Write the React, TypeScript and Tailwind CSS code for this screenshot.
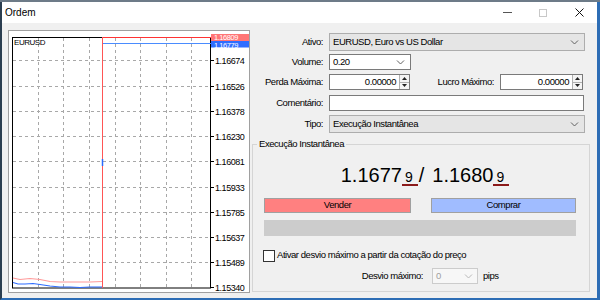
import React from 'react';

const ui = "font-['Liberation_Sans',Arial,sans-serif] text-[9.5px] tracking-[-0.45px]";

const gridX = [38, 63, 89, 115, 140, 166, 191];
const gridY = [60, 86, 111, 136, 161, 187, 212, 237, 262];
const prices: [string, number][] = [
  ['1.16674', 60],
  ['1.16526', 86],
  ['1.16378', 111],
  ['1.16230', 136],
  ['1.16081', 161],
  ['1.15933', 187],
  ['1.15785', 212],
  ['1.15637', 237],
  ['1.15489', 262],
  ['1.15340', 287],
];

const Chevron = ({ color = '#606060' }: { color?: string }) => (
  <svg width="9" height="5" viewBox="0 0 9 5">
    <path d="M1 0.5 L4.5 4 L8 0.5" fill="none" stroke={color} strokeWidth="1" />
  </svg>
);

const Spinner = () => (
  <div className="flex flex-col w-[10px] h-full border-l border-[#b0b0b0] bg-[#f4f4f4]">
    <div className="flex-1 flex items-center justify-center border-b border-[#b0b0b0]">
      <svg width="5" height="3" viewBox="0 0 5 3">
        <path d="M0 3 L2.5 0 L5 3 Z" fill="#222" />
      </svg>
    </div>
    <div className="flex-1 flex items-center justify-center">
      <svg width="5" height="3" viewBox="0 0 5 3">
        <path d="M0 0 L2.5 3 L5 0 Z" fill="#222" />
      </svg>
    </div>
  </div>
);

const Chart = () => (
  <div className="ml-[6px] mt-[7px] w-[242px] h-[263px] border border-[#a0a0a0] bg-white">
    <svg width={240} height={261} viewBox="9 31 240 261" className="block">
      {gridX.map((x) => (
        <line key={x} x1={x + 0.5} y1={38} x2={x + 0.5} y2={288} stroke="#a8a8a8" strokeDasharray="3 3" />
      ))}
      {gridY.map((y) => (
        <line key={y} x1={13} y1={y + 0.5} x2={210} y2={y + 0.5} stroke="#a8a8a8" strokeDasharray="3 3" />
      ))}
      <rect x={12.5} y={37.5} width={198} height={250.5} fill="none" stroke="#000" />
      {prices.map(([p, y]) => (
        <g key={p}>
          <line x1={210} y1={y + 0.5} x2={214} y2={y + 0.5} stroke="#000" />
          <text x={215} y={y + 3.5} fontSize={9} fontFamily="Liberation Sans, Arial, sans-serif" fill="#000">
            {p}
          </text>
        </g>
      ))}
      <text x={14} y={44.5} fontSize={8} fontFamily="Liberation Sans, Arial, sans-serif" fill="#000">
        EURUSD
      </text>
      <line x1={102} y1={37.5} x2={211} y2={37.5} stroke="#ff3333" />
      <line x1={103} y1={43.5} x2={211} y2={43.5} stroke="#4a8cff" />
      <line x1={102.5} y1={37} x2={102.5} y2={288} stroke="#ff5555" />
      <line x1={102.5} y1={159} x2={102.5} y2={166} stroke="#2a6cff" strokeWidth={1.5} />
      <polyline
        points="13,278 20,279.5 30,278.5 40,279.5 50,281.5 60,282 75,282 90,282 102,281.5"
        fill="none"
        stroke="#ff9a9a"
        strokeWidth={1.2}
      />
      <polyline
        points="13,282.5 18,284 25,284 33,283.5 40,284.5 50,286 60,287 70,287 80,287.5 90,287 102,287"
        fill="none"
        stroke="#2f6dff"
        strokeWidth={1.2}
      />
      <rect x={211} y={34} width={38} height={7} fill="#ff7575" />
      <text x={214} y={40} fontSize={7.5} fontFamily="Liberation Sans, Arial, sans-serif" fill="#fff">
        1.16809
      </text>
      <rect x={211} y={41} width={38} height={6.5} fill="#2f6dff" />
      <text x={214} y={47.5} fontSize={7.5} fontFamily="Liberation Sans, Arial, sans-serif" fill="#fff">
        1.16779
      </text>
    </svg>
  </div>
);

const Label = ({ children, w = 'w-[77px]' }: { children: React.ReactNode; w?: string }) => (
  <div className={`${w} shrink-0 text-right pr-[6px]`}>{children}</div>
);

const Price = ({ main, last }: { main: string; last: string }) => (
  <span className="flex items-baseline">
    <span>{main}</span>
    <span className="text-[14px] border-b-2 border-[#8b1a1a] leading-[14px] pl-[3px] pr-[5px] -mb-[2px]">{last}</span>
  </span>
);

export default function App() {
  return (
    <div className={`w-[600px] h-[300px] overflow-hidden bg-[#6d7b88] pt-[2px] text-black ${ui}`}>
      <div className="h-[298px] flex flex-col border-l-2 border-r-[3px] border-b-2 border-l-[#2b3e50] border-r-[#2d6db5] border-b-[#2d6db5] bg-[#f0f0f0]">
        {/* title bar */}
        <div className="h-[21px] bg-white flex items-center shrink-0">
          <span className="pl-[3px] text-[10px] tracking-normal">Ordem</span>
          <div className="ml-auto flex h-full">
            <div className="w-[36px] flex items-center justify-center">
              <div className="w-[9px] h-px bg-[#555]" />
            </div>
            <div className="w-[36px] flex items-center justify-center">
              <div className="w-[8px] h-[8px] border border-[#c8c8c8]" />
            </div>
            <div className="w-[36px] flex items-center justify-center">
              <svg width="9" height="9" viewBox="0 0 9 9">
                <path d="M0.5 0.5 L8.5 8.5 M8.5 0.5 L0.5 8.5" stroke="#111" strokeWidth="1" />
              </svg>
            </div>
          </div>
        </div>

        <div className="flex flex-1">
          <Chart />

          <div className="ml-[2px] w-[338px] pt-[10px] flex flex-col">
            <div className="flex items-center h-[18px]">
              <Label>Ativo:</Label>
              <div className="w-[256px] h-full bg-[#e5e5e5] border border-[#adadad] flex items-center pl-[3px] pr-[5px]">
                <span>EURUSD, Euro vs US Dollar</span>
                <span className="ml-auto"><Chevron /></span>
              </div>
            </div>

            <div className="flex items-center h-[16px] mt-[3px]">
              <Label>Volume:</Label>
              <div className="w-[82px] h-full bg-white border border-[#7a7a7a] flex items-center pl-[3px] pr-[5px]">
                <span>0.20</span>
                <span className="ml-auto"><Chevron /></span>
              </div>
            </div>

            <div className="flex items-center h-[16px] mt-[4px]">
              <Label>Perda Máxima:</Label>
              <div className="w-[81px] h-full bg-white border border-[#7a7a7a] flex items-center">
                <span className="flex-1 text-right pr-[3px]">0.00000</span>
                <Spinner />
              </div>
              <Label w="w-[90px]">Lucro Máximo:</Label>
              <div className="w-[83px] h-full bg-white border border-[#7a7a7a] flex items-center">
                <span className="flex-1 text-right pr-[3px]">0.00000</span>
                <Spinner />
              </div>
            </div>

            <div className="flex items-center h-[16px] mt-[5px]">
              <Label>Comentário:</Label>
              <div className="w-[255px] h-full bg-white border border-[#7a7a7a]" />
            </div>

            <div className="flex items-center h-[18px] mt-[4px]">
              <Label>Tipo:</Label>
              <div className="w-[256px] h-full bg-[#e5e5e5] border border-[#adadad] flex items-center pl-[3px] pr-[5px]">
                <span>Execução Instantânea</span>
                <span className="ml-auto"><Chevron /></span>
              </div>
            </div>

            <fieldset className="mt-[5px] w-[338px] border border-[#d5d5d5] pb-[7px]">
              <legend className="ml-[4px] px-[2px] leading-[12px]">Execução Instantânea</legend>

              <div className="mt-[13px] h-[24px] flex justify-center items-baseline pl-[8px] text-[20px] leading-[24px] tracking-normal">
                <Price main="1.1677" last="9" />
                <span className="ml-[1px] mr-[8px]">/</span>
                <Price main="1.1680" last="9" />
              </div>

              <div className="mt-[11px] pl-[11px] flex gap-[20px]">
                <div className="w-[147px] h-[15px] bg-[#ff8080] border border-[#a0a0a0] flex items-center justify-center">
                  Vender
                </div>
                <div className="w-[145px] h-[15px] bg-[#a0bcff] border border-[#a0a0a0] flex items-center justify-center">
                  Comprar
                </div>
              </div>

              <div className="mt-[7px] ml-[11px] w-[312px] h-[16px] bg-[#cccccc]" />

              <div className="mt-[13px] pl-[10px] flex items-center h-[13px]">
                <div className="w-[12px] h-[12px] bg-white border border-[#333]" />
                <span className="ml-[2px]">Ativar desvio máximo a partir da cotação do preço</span>
              </div>

              <div className="mt-[6px] flex items-center h-[16px]">
                <div className="w-[170px] text-right">Desvio máximo:</div>
                <div className="ml-[9px] w-[46px] h-full bg-[#f7f7f7] border border-[#cccccc] flex items-center pl-[3px] pr-[4px] text-[#a0a0a0]">
                  <span>0</span>
                  <span className="ml-auto"><Chevron color="#b8b8b8" /></span>
                </div>
                <span className="ml-[5px]">pips</span>
              </div>
            </fieldset>
          </div>
        </div>
      </div>
    </div>
  );
}
